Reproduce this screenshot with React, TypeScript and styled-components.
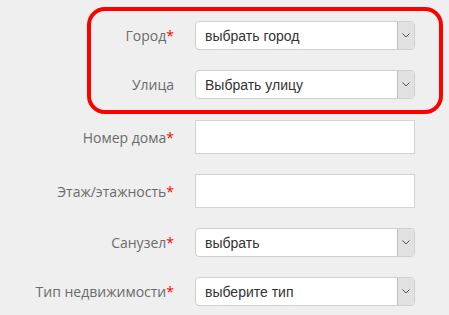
import React from "react";
import styled, { createGlobalStyle } from "styled-components";

const GlobalStyle = createGlobalStyle`
  html, body {
    margin: 0;
    padding: 0;
    background: #efefef;
  }
  body {
    font-family: "Open Sans", "Liberation Sans", sans-serif;
  }
`;

type Field = {
  label: string;
  required: boolean;
  kind: "select" | "input";
  value?: string;
};

const addressFields: Field[] = [
  { label: "Город", required: true, kind: "select", value: "выбрать город" },
  { label: "Улица", required: false, kind: "select", value: "Выбрать улицу" },
];

const otherFields: Field[] = [
  { label: "Номер дома", required: true, kind: "input" },
  { label: "Этаж/этажность", required: true, kind: "input" },
  { label: "Санузел", required: true, kind: "select", value: "выбрать" },
  { label: "Тип недвижимости", required: true, kind: "select", value: "выберите тип" },
];

const Chevron = () => (
  <svg width="8" height="5" viewBox="0 0 8 5">
    <path d="M0.5 0.5 L4 4 L7.5 0.5" fill="none" stroke="#555" strokeWidth="1" />
  </svg>
);

const FormRow = ({ field, labelWidth }: { field: Field; labelWidth: number }) => (
  <Row $labelWidth={labelWidth}>
    <Label>
      {field.label}
      {field.required && <Star>*</Star>}
    </Label>
    {field.kind === "select" ? (
      <SelectBox>
        <SelectValue>{field.value}</SelectValue>
        <ArrowBox>
          <Chevron />
        </ArrowBox>
      </SelectBox>
    ) : (
      <TextInput type="text" />
    )}
  </Row>
);

const App = () => {
  return (
    <>
      <GlobalStyle />
      <Form>
        <Highlight>
          {addressFields.map((f) => (
            <FormRow key={f.label} field={f} labelWidth={83} />
          ))}
        </Highlight>
        <Rows>
          {otherFields.map((f) => (
            <FormRow key={f.label} field={f} labelWidth={174} />
          ))}
        </Rows>
      </Form>
    </>
  );
};

export default App;

const Form = styled.div`
  width: 449px;
  height: 315px;
  padding-top: 7px;
  box-sizing: border-box;
  display: flex;
  flex-direction: column;
  gap: 6px;
`;

const Highlight = styled.div`
  margin-left: 87px;
  width: 356px;
  box-sizing: border-box;
  border: 4px solid #ff0000;
  border-radius: 18px;
  padding: 10px 0 11px;
  display: flex;
  flex-direction: column;
  gap: 20px;
`;

const Rows = styled.div`
  display: flex;
  flex-direction: column;
  gap: 20px;
`;

const Row = styled.div<{ $labelWidth: number }>`
  display: grid;
  grid-template-columns: ${({ $labelWidth }) => $labelWidth}px 220px;
  column-gap: 21px;
  align-items: center;
`;

const Label = styled.label`
  text-align: right;
  font-size: 14px;
  color: #6b6b6b;
  white-space: nowrap;
`;

const Star = styled.span`
  color: #ff0000;
`;

const SelectBox = styled.div`
  height: 29px;
  box-sizing: border-box;
  background: #fff;
  border: 1px solid #cfcfcf;
  border-radius: 4px;
  display: flex;
  align-items: stretch;
  overflow: hidden;
`;

const SelectValue = styled.span`
  flex: 1;
  display: flex;
  align-items: center;
  padding-left: 9px;
  font-family: "Liberation Sans", Arial, sans-serif;
  font-size: 14px;
  color: #333;
`;

const ArrowBox = styled.span`
  width: 16px;
  background: #e1e1e1;
  border-left: 1px solid #bdbdbd;
  display: flex;
  align-items: center;
  justify-content: center;
`;

const TextInput = styled.input`
  height: 34px;
  box-sizing: border-box;
  background: #fff;
  border: 1px solid #d2d2d2;
  border-radius: 0;
  outline: none;
  padding: 0 9px;
`;
